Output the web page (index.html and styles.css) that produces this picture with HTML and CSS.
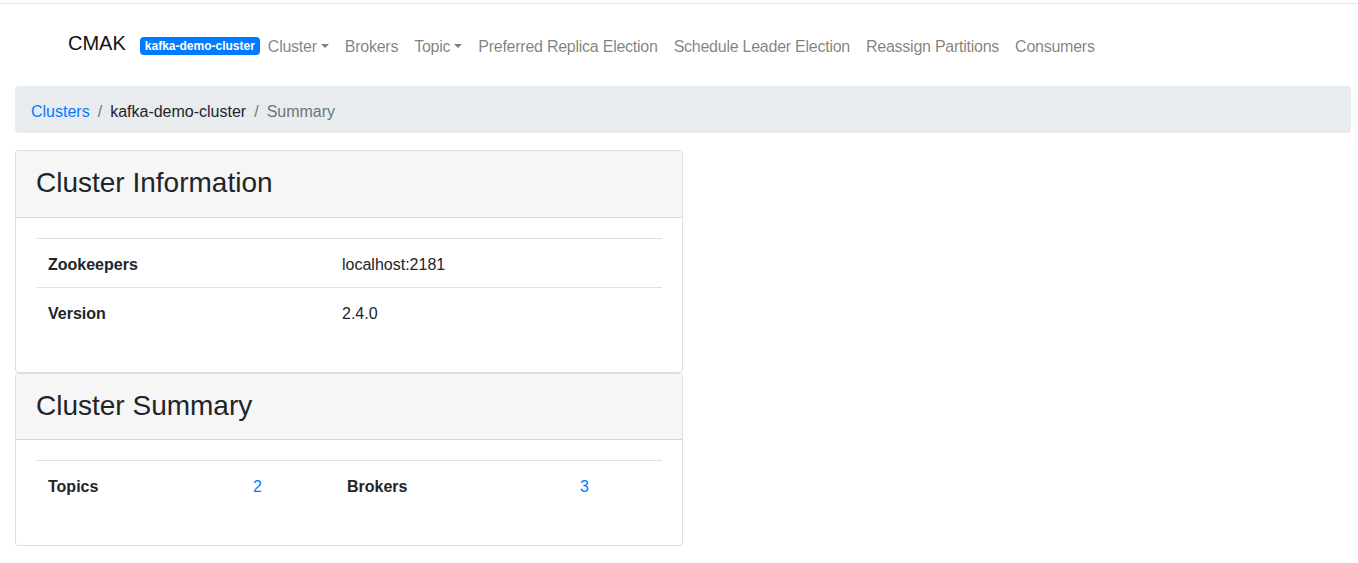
FILE: index.html
```html
<!DOCTYPE html>
<html lang="en">
<head>
<meta charset="utf-8">
<title>CMAK - kafka-demo-cluster</title>
<link rel="stylesheet" href="styles.css">
</head>
<body>
<div class="topline"></div>
<nav class="navbar">
  <a class="brand" href="#">CMAK</a>
  <span class="badge">kafka-demo-cluster</span>
  <ul class="nav">
    <li><a class="nav-link dropdown" href="#">Cluster</a></li>
    <li><a class="nav-link" href="#">Brokers</a></li>
    <li><a class="nav-link dropdown" href="#">Topic</a></li>
    <li><a class="nav-link" href="#">Preferred Replica Election</a></li>
    <li><a class="nav-link" href="#">Schedule Leader Election</a></li>
    <li><a class="nav-link" href="#">Reassign Partitions</a></li>
    <li><a class="nav-link" href="#">Consumers</a></li>
  </ul>
</nav>
<main class="main">
  <ol class="breadcrumb">
    <li><a href="#">Clusters</a></li>
    <li class="sep">/</li>
    <li>kafka-demo-cluster</li>
    <li class="sep">/</li>
    <li class="active">Summary</li>
  </ol>
  <div class="cards">
    <section class="card">
      <div class="card-header"><h3>Cluster Information</h3></div>
      <div class="card-body">
        <table class="table">
          <tbody>
            <tr><th class="c-info-key">Zookeepers</th><td>localhost:2181</td></tr>
            <tr><th class="c-info-key">Version</th><td>2.4.0</td></tr>
          </tbody>
        </table>
      </div>
    </section>
    <section class="card">
      <div class="card-header"><h3>Cluster Summary</h3></div>
      <div class="card-body">
        <table class="table">
          <tbody>
            <tr>
              <th class="c-s1">Topics</th><td class="c-s2"><a href="#">2</a></td>
              <th class="c-s3">Brokers</th><td class="c-s4"><a href="#">3</a></td>
            </tr>
          </tbody>
        </table>
      </div>
    </section>
  </div>
</main>
</body>
</html>
```

FILE: styles.css
```css
* { box-sizing: border-box; }
html, body { margin: 0; padding: 0; background: #fff; }
body {
  font-family: "Liberation Sans", Arial, sans-serif;
  font-size: 16px;
  line-height: 1.5;
  color: #212529;
}
a { color: #007bff; text-decoration: none; }

.topline {
  margin-top: 3px;
  border-top: 1px solid #e3e3e3;
}

.navbar {
  display: flex;
  align-items: center;
  padding: 22px 16px 8px 68px;
}
.brand {
  font-size: 20px;
  line-height: 30px;
  padding: 2px 0 8px;
  color: #111;
  margin-right: 14px;
}
.badge {
  display: inline-block;
  background: #007bff;
  color: #fff;
  font-size: 12px;
  font-weight: 700;
  line-height: 1;
  padding: 3px 5px 3px 5px;
  border-radius: 4px;
  white-space: nowrap;
}
.nav {
  display: flex;
  list-style: none;
  margin: 0;
  padding: 0;
}
.nav-link {
  display: block;
  padding: 9px 8px 7px;
  color: rgba(0,0,0,.5);
  letter-spacing: -0.25px;
  white-space: nowrap;
}
.dropdown::after {
  content: "";
  display: inline-block;
  margin-left: 4px;
  vertical-align: 4px;
  border-top: 4.8px solid;
  border-right: 4.8px solid transparent;
  border-left: 4.8px solid transparent;
}

.main {
  padding: 0 7px 0 15px;
}
.breadcrumb {
  display: flex;
  list-style: none;
  margin: 12px 0 17px;
  padding: 14px 16px 9px;
  background: #e9ecef;
  border-radius: 4px;
}
.breadcrumb .sep {
  color: #6c757d;
  padding: 0 8px;
}
.breadcrumb .active { color: #6c757d; }

.cards {
  width: 668px;
}
.card {
  border: 1px solid rgba(0,0,0,.125);
  border-radius: 4px;
  background: #fff;
}
.card-header {
  background: #f6f6f6;
  border-bottom: 1px solid rgba(0,0,0,.125);
  padding: 15px 20px 11px;
}
.card-header h3 {
  margin: 0 0 6px;
  font-size: 28px;
  font-weight: 400;
  line-height: 1.2;
  color: #212529;
}
.card-body {
  padding: 20px;
}
.table {
  width: 100%;
  border-collapse: collapse;
  margin-bottom: 16px;
  table-layout: fixed;
}
.table th, .table td {
  padding: 14px 12px 10px;
  border-top: 1px solid #dee2e6;
  text-align: left;
  vertical-align: top;
}
.table th { font-weight: 700; }
.c-info-key { width: 294px; }
.c-s1 { width: 205px; }
.c-s2 { width: 94px; }
.c-s3 { width: 233px; }
.c-s4 { width: 94px; }
```
